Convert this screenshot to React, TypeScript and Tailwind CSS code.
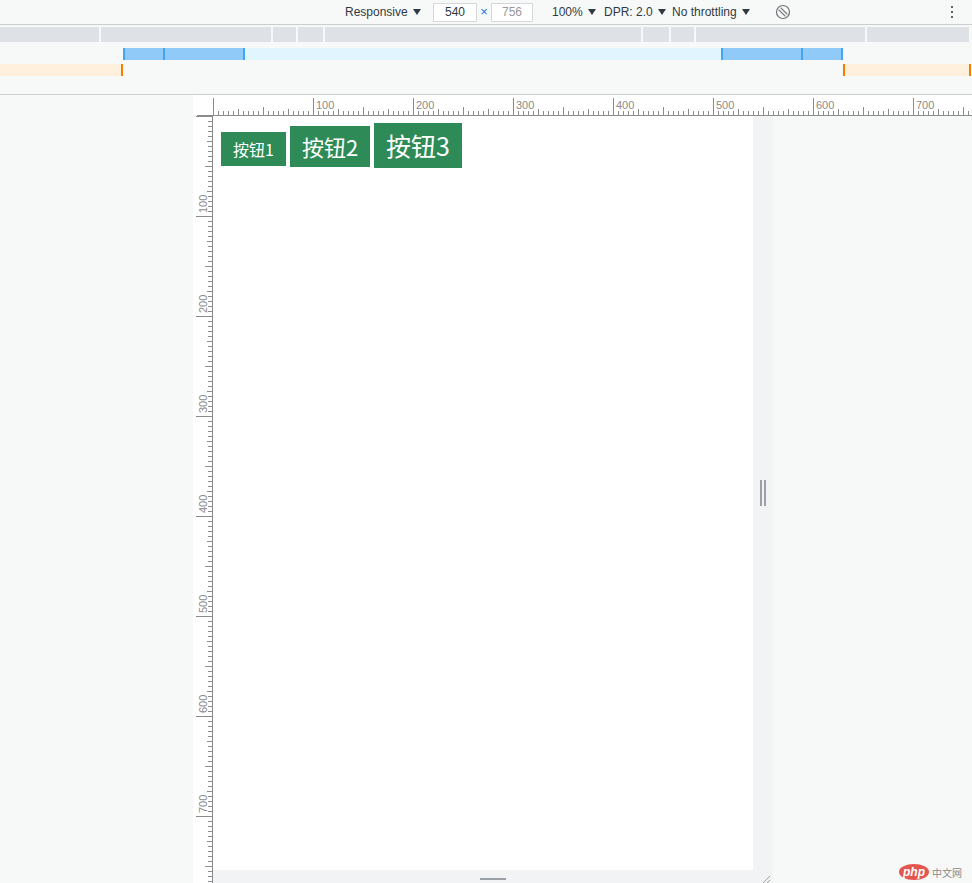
import React from 'react'

function Caret() {
  return (
    <svg width="8" height="6" viewBox="0 0 8 6" className="ml-[5px] shrink-0">
      <path d="M0 0H8L4 6Z" fill="#303942" />
    </svg>
  )
}

function HRuler() {
  const w = 759
  const ticks = []
  for (let x = 0; x < w; x += 5) {
    const h = x % 100 === 0 ? 17 : x % 50 === 0 ? 8 : x % 25 === 0 ? 6 : 4
    ticks.push(<line key={x} x1={x + 0.5} x2={x + 0.5} y1={20} y2={20 - h} stroke="#8b8b8b" />)
    if (x % 100 === 0 && x > 0) {
      ticks.push(
        <text key={'t' + x} x={x + 3} y={14} fontSize="11" fill="#8b8b8b" fontFamily="Liberation Sans, sans-serif">
          {x}
        </text>
      )
    }
  }
  return (
    <svg width={w} height="21" className="block">
      <line x1="0" x2={w} y1="20.5" y2="20.5" stroke="#8b8b8b" />
      {ticks}
    </svg>
  )
}

function VRuler() {
  const h = 767
  const ticks = []
  for (let y = 0; y < h; y += 5) {
    const len = y % 100 === 0 ? 17 : y % 50 === 0 ? 8 : y % 25 === 0 ? 6 : 5
    ticks.push(<line key={y} y1={y + 0.5} y2={y + 0.5} x1={20} x2={20 - len} stroke="#8b8b8b" />)
    if (y % 100 === 0 && y > 0) {
      ticks.push(
        <text
          key={'t' + y}
          transform={`translate(14 ${y - 3}) rotate(-90)`}
          fontSize="11"
          fill="#8b8b8b"
          fontFamily="Liberation Sans, sans-serif"
        >
          {y}
        </text>
      )
    }
  }
  return (
    <svg width="20" height={h} className="block">
      <line x1="19.5" x2="19.5" y1="0" y2={h} stroke="#8b8b8b" />
      {ticks}
    </svg>
  )
}

export default function App() {
  const segments = [99, 170, 23, 25, 316, 26, 23, 169, 102]

  return (
    <div className="relative flex h-[883px] w-[972px] flex-col overflow-hidden bg-[#f7f9f8] font-['Liberation_Sans',sans-serif]">
      {/* device toolbar */}
      <div className="flex h-[25px] shrink-0 items-center border-b border-[#cbcdd1] text-[12px] text-[#303942]">
        <div className="ml-[345px] flex w-[88px] items-center">
          Responsive
          <Caret />
        </div>
        <div className="flex h-[19px] w-[44px] items-center justify-center border border-[#d5d7da] bg-white">540</div>
        <div className="flex w-[14px] justify-center text-[13px] text-[#1a73e8]">×</div>
        <div className="flex h-[19px] w-[42px] items-center justify-center border border-[#d5d7da] bg-white text-[#9a9a9a]">
          756
        </div>
        <div className="ml-[19px] flex w-[52px] items-center">
          100%
          <Caret />
        </div>
        <div className="flex w-[68px] items-center">
          DPR: 2.0
          <Caret />
        </div>
        <div className="flex w-[103px] items-center">
          No throttling
          <Caret />
        </div>
        <svg width="16" height="16" viewBox="0 0 16 16" className="shrink-0">
          <circle cx="8" cy="8" r="6.5" fill="none" stroke="#6e7378" strokeWidth="1.2" />
          <line x1="3.6" y1="5.6" x2="10.4" y2="12.4" stroke="#6e7378" strokeWidth="1.2" />
          <line x1="5.6" y1="3.6" x2="12.4" y2="10.4" stroke="#6e7378" strokeWidth="1.2" />
        </svg>
        <div className="ml-auto mr-[19px] flex flex-col gap-[3px]">
          <span className="h-[2px] w-[2px] bg-[#5f6368]" />
          <span className="h-[2px] w-[2px] bg-[#5f6368]" />
          <span className="h-[2px] w-[2px] bg-[#5f6368]" />
        </div>
      </div>

      {/* media query bars */}
      <div className="flex h-[70px] shrink-0 flex-col border-b border-[#cbcdd1] pt-[2px]">
        <div className="flex h-[15px] gap-[2px]">
          {segments.map((w, i) => (
            <div key={i} className="h-full bg-[#dee1e6]" style={{ width: w }} />
          ))}
        </div>
        <div className="ml-[123px] mt-[6px] flex h-[12px]">
          <div className="w-[2px] bg-[#42a5f5]" />
          <div className="w-[38px] bg-[#90caf9]" />
          <div className="w-[2px] bg-[#42a5f5]" />
          <div className="w-[78px] bg-[#90caf9]" />
          <div className="w-[2px] bg-[#42a5f5]" />
          <div className="w-[476px] bg-[#e1f5fe]" />
          <div className="w-[2px] bg-[#42a5f5]" />
          <div className="w-[78px] bg-[#90caf9]" />
          <div className="w-[2px] bg-[#42a5f5]" />
          <div className="w-[38px] bg-[#90caf9]" />
          <div className="w-[2px] bg-[#42a5f5]" />
        </div>
        <div className="mt-[4px] flex h-[12px]">
          <div className="w-[121px] bg-[#fff0de]" />
          <div className="w-[2px] bg-[#f57c00]" />
          <div className="w-[720px]" />
          <div className="w-[2px] bg-[#f57c00]" />
          <div className="w-[124px] bg-[#fff0de]" />
          <div className="w-[2px] bg-[#f57c00]" />
        </div>
      </div>

      {/* rulers + emulated viewport */}
      <div className="flex flex-1 flex-col">
        <div className="flex h-[21px] shrink-0">
          <div className="w-[193px] shrink-0" />
          <div className="w-[20px] shrink-0 bg-white">
            <svg width="20" height="21" className="block">
              <line x1="4" x2="20" y1="20.5" y2="20.5" stroke="#8b8b8b" />
            </svg>
          </div>
          <div className="flex-1 overflow-hidden bg-white">
            <HRuler />
          </div>
        </div>

        <div className="flex flex-1 overflow-hidden">
          <div className="w-[193px] shrink-0" />
          <div className="w-[20px] shrink-0 overflow-hidden bg-white">
            <VRuler />
          </div>
          <div className="flex w-[560px] shrink-0 flex-col">
            <div className="flex h-[754px] shrink-0">
              <div className="w-[540px] bg-white">
                <div className="flex items-baseline gap-[4px] pl-[8px] pt-[7px] font-['Noto_Sans_CJK_SC',sans-serif] text-white">
                  <button className="bg-[#2e8b57] px-[12px] py-[8px] text-[16px] leading-[18px]">按钮1</button>
                  <button className="bg-[#2e8b57] px-[12px] py-[8px] text-[22px] leading-[25px]">按钮2</button>
                  <button className="bg-[#2e8b57] px-[12px] py-[8px] text-[25px] leading-[29px]">按钮3</button>
                </div>
              </div>
              <div className="flex w-[20px] items-center justify-center gap-[2px] bg-[#f1f3f4]">
                <span className="h-[26px] w-[2px] bg-[#9aa0a6]" />
                <span className="h-[26px] w-[2px] bg-[#9aa0a6]" />
              </div>
            </div>
            <div className="relative flex flex-1 justify-center bg-[#f1f3f4]">
              <span className="mt-[8px] h-[2px] w-[26px] bg-[#9aa0a6]" />
              <svg width="12" height="12" viewBox="0 0 12 12" className="absolute right-[2px] top-[4px]">
                <line x1="2" y1="11" x2="11" y2="2" stroke="#9aa0a6" strokeWidth="1" />
                <line x1="6" y1="11" x2="11" y2="6" stroke="#9aa0a6" strokeWidth="1" />
              </svg>
            </div>
          </div>
          <div className="flex-1" />
        </div>
      </div>

      {/* watermark */}
      <div className="absolute bottom-[3px] right-[10px] flex items-center gap-[3px]">
        <span className="rounded-[50%] bg-[#e5564e] px-[4px] text-[12px] font-bold italic leading-[16px] text-white">
          php
        </span>
        <span className="font-['Noto_Sans_CJK_SC',sans-serif] text-[10px] text-[#8a8a8a]">中文网</span>
      </div>
    </div>
  )
}
